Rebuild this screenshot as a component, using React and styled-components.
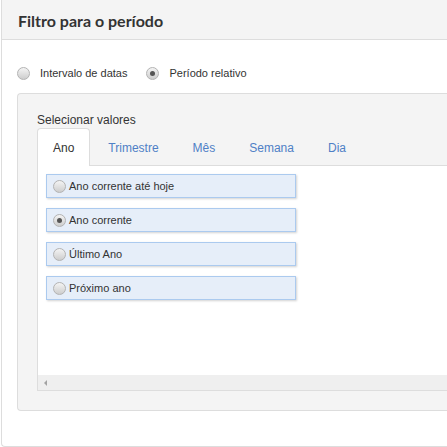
import React, { useState } from "react";
import styled, { createGlobalStyle } from "styled-components";

const GlobalStyle = createGlobalStyle`
  html, body {
    margin: 0;
    padding: 0;
    overflow: hidden;
    background: #fff;
    font-family: "Liberation Sans", Arial, sans-serif;
    color: #333;
  }
`;

/* the panel is wider than the window in the original, so its right edge is cut off */
const Panel = styled.div`
  height: 447px;
  margin-left: 1px;
  border: 1px solid #ddd;
  border-top: none;
  border-right: none;
  border-radius: 0 0 0 4px;
  display: flex;
  flex-direction: column;
  box-sizing: border-box;
`;

const Header = styled.div`
  height: 40px;
  flex: none;
  background: #f4f4f4;
  border-bottom: 1px solid #ddd;
  display: flex;
  align-items: center;
  padding: 1px 16px 0;
  box-sizing: border-box;
`;

const Title = styled.h3`
  margin: 0;
  font-family: Lato, "Open Sans", sans-serif;
  font-weight: 700;
  font-size: 16px;
  color: #333;
`;

const Body = styled.div`
  flex: 1;
  padding: 25px 0 0 15px;
  display: flex;
  flex-direction: column;
`;

const ModeRow = styled.div`
  display: flex;
  align-items: center;
  gap: 19px;
  height: 16px;
  margin-bottom: 12px;
`;

const ModeLabel = styled.label`
  display: flex;
  align-items: center;
  gap: 10px;
  font-size: 11px;
  color: #333;
  cursor: pointer;
`;

const Radio = styled.span`
  width: 11px;
  height: 11px;
  flex: none;
  border-radius: 50%;
  border: 1px solid #b3b3b3;
  background: linear-gradient(#f4f4f4, #cdcdcd);
  display: flex;
  align-items: center;
  justify-content: center;
  &::after {
    content: "";
    width: 5px;
    height: 5px;
    border-radius: 50%;
    background: ${(p) => (p.$checked ? "#555" : "transparent")};
  }
`;

const ValuesBox = styled.div`
  background: #f4f4f4;
  border: 1px solid #ddd;
  border-right: none;
  border-radius: 4px 0 0 4px;
  padding: 19px 0 19px 19px;
`;

const BoxLabel = styled.div`
  font-size: 12px;
  line-height: 14px;
  margin-bottom: 1px;
`;

const TabBar = styled.div`
  display: flex;
  height: 38px;
  border-bottom: 1px solid #ddd;
  box-sizing: border-box;
`;

const Tab = styled.div`
  padding: 0 15px;
  margin-right: 2px;
  height: 38px;
  box-sizing: border-box;
  display: flex;
  align-items: center;
  font-size: 12px;
  border: 1px solid ${(p) => (p.$active ? "#ddd" : "transparent")};
  border-bottom: none;
  border-radius: 4px 4px 0 0;
  background: ${(p) => (p.$active ? "#fff" : "transparent")};
  color: ${(p) => (p.$active ? "#333" : "#4f80c6")};
  cursor: pointer;
`;

const TabPanel = styled.div`
  background: #fff;
  border-left: 1px solid #ddd;
  border-bottom: 1px solid #ddd;
`;

const OptionList = styled.div`
  height: 209px;
  padding: 8px 8px 0;
  box-sizing: border-box;
  display: flex;
  flex-direction: column;
  gap: 10px;
`;

const Option = styled.label`
  width: 250px;
  height: 24px;
  box-sizing: border-box;
  background: #e6eef9;
  border: 1px solid #abcaef;
  box-shadow: 1px 1px 2px rgba(0, 0, 0, 0.18);
  display: flex;
  align-items: center;
  gap: 3px;
  padding-left: 6px;
  font-size: 11px;
  color: #333;
  cursor: pointer;
`;

const ScrollBar = styled.div`
  height: 15px;
  background: #efefef;
  display: flex;
  align-items: center;
  padding-left: 6px;
`;

const ArrowLeft = styled.span`
  width: 0;
  height: 0;
  border-top: 3px solid transparent;
  border-bottom: 3px solid transparent;
  border-right: 3px solid #a3a3a3;
`;

const tabs = ["Ano", "Trimestre", "Mês", "Semana", "Dia"];
const options = [
  "Ano corrente até hoje",
  "Ano corrente",
  "Último Ano",
  "Próximo ano",
];

export default function App() {
  const [mode, setMode] = useState("relativo");
  const [tab, setTab] = useState("Ano");
  const [option, setOption] = useState("Ano corrente");

  return (
    <>
      <GlobalStyle />
      <Panel>
        <Header>
          <Title>Filtro para o período</Title>
        </Header>
        <Body>
          <ModeRow>
            <ModeLabel onClick={() => setMode("datas")}>
              <Radio $checked={mode === "datas"} />
              Intervalo de datas
            </ModeLabel>
            <ModeLabel onClick={() => setMode("relativo")}>
              <Radio $checked={mode === "relativo"} />
              Período relativo
            </ModeLabel>
          </ModeRow>
          <ValuesBox>
            <BoxLabel>Selecionar valores</BoxLabel>
            <TabBar>
              {tabs.map((t) => (
                <Tab key={t} $active={tab === t} onClick={() => setTab(t)}>
                  {t}
                </Tab>
              ))}
            </TabBar>
            <TabPanel>
              <OptionList>
                {options.map((o) => (
                  <Option key={o} onClick={() => setOption(o)}>
                    <Radio $checked={option === o} />
                    {o}
                  </Option>
                ))}
              </OptionList>
              <ScrollBar>
                <ArrowLeft />
              </ScrollBar>
            </TabPanel>
          </ValuesBox>
        </Body>
      </Panel>
    </>
  );
}
